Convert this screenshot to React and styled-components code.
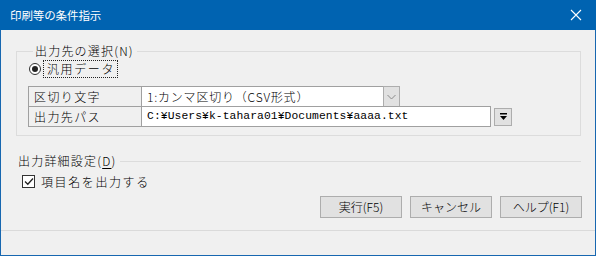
import React from "react";
import styled, { createGlobalStyle } from "styled-components";

const Global = createGlobalStyle`
  html, body { margin: 0; padding: 0; background: #f0f0f0; }
  * { box-sizing: border-box; }
`;

const CJK = `"Noto Sans CJK JP", "Noto Sans", sans-serif`;

const Window = styled.div`
  width: 596px;
  height: 256px;
  border: 1px solid #1767b0;
  border-top: none;
  display: flex;
  flex-direction: column;
  background: #f0f0f0;
  font-family: ${CJK};
  font-weight: 300;
  color: #000;
`;

const TitleBar = styled.div`
  height: 30px;
  margin: 0 -1px;
  background: #0063b1;
  display: flex;
  align-items: center;
  justify-content: space-between;
  padding: 0 10px 0 10px;
  color: #fff;
  font-size: 11.5px;
  font-weight: 400;
  letter-spacing: -0.1px;
`;

const CloseBtn = styled.div`
  width: 20px;
  height: 20px;
  display: flex;
  align-items: center;
  justify-content: center;
`;

const Body = styled.div`
  flex: 1;
  display: flex;
  flex-direction: column;
`;

const Group = styled.fieldset`
  margin: 13px 14px 0 15px;
  padding: 0 0 8px 11px;
  border: 1px solid #dcdcdc;
  min-width: 0;
`;

const Legend = styled.legend`
  margin-left: 5px;
  padding: 0 3px 0 2px;
  font-size: 12px;
  letter-spacing: 1.2px;
  line-height: 16px;
`;

const RadioRow = styled.div`
  display: flex;
  align-items: center;
  height: 19px;
  margin-top: 0px;
  margin-left: 1px;
`;

const RadioDot = styled.span`
  width: 12px;
  height: 12px;
  border-radius: 50%;
  border: 1px solid #333;
  background: #fff;
  display: flex;
  align-items: center;
  justify-content: center;
  &::after {
    content: "";
    width: 6px;
    height: 6px;
    border-radius: 50%;
    background: #222;
  }
`;

const FocusLabel = styled.span`
  margin-left: 2px;
  padding: 0 2px 0 3px;
  height: 18px;
  line-height: 16px;
  border: 1px dotted #222;
  font-size: 12px;
  letter-spacing: 1.6px;
`;

const Table = styled.div`
  margin-top: 8px;
  display: flex;
  flex-direction: column;
`;

const Row = styled.div`
  display: flex;
  align-items: ${(p) => (p.$center ? "center" : "stretch")};
  height: 21px;
  & + & {
    margin-top: -1px;
  }
`;

const LabelCell = styled.div`
  width: 114px;
  height: 21px;
  border: 1px solid #a0a0a0;
  padding-left: 5px;
  font-size: 12px;
  letter-spacing: 1.4px;
  line-height: 19px;
  background: #f0f0f0;
`;

const ValueCell = styled.div`
  width: ${(p) => p.$w}px;
  height: 21px;
  margin-left: -1px;
  border: 1px solid #a0a0a0;
  background: #fff;
  padding-left: 5px;
  line-height: 19px;
  font-size: ${(p) => (p.$mono ? "11.3px" : "12px")};
  letter-spacing: ${(p) => (p.$mono ? "0.1px" : "0.8px")};
  font-family: ${(p) => (p.$mono ? `"Liberation Mono", "DejaVu Sans Mono", monospace` : CJK)};
  font-weight: ${(p) => (p.$mono ? 400 : 300)};
  white-space: nowrap;
  overflow: hidden;
`;

const DropBtn = styled.div`
  width: 17px;
  height: 21px;
  margin-left: -1px;
  border: 1px solid #adadad;
  background: #e1e1e1;
  display: flex;
  align-items: center;
  justify-content: center;
`;

const SmallBtn = styled.div`
  width: 18px;
  height: 18px;
  margin-left: 3px;
  border: 1px solid #adadad;
  background: #e1e1e1;
  display: flex;
  align-items: center;
  justify-content: center;
`;

const SectionHead = styled.div`
  display: flex;
  align-items: center;
  margin: 17px 14px 0 17px;
  font-size: 12px;
  letter-spacing: 1.2px;
  line-height: 16px;
`;

const HeadLine = styled.div`
  flex: 1;
  height: 1px;
  background: #dcdcdc;
  margin-left: 4px;
`;

const U = styled.span`
  text-decoration: underline;
  text-underline-offset: 2px;
`;

const CheckRow = styled.div`
  display: flex;
  align-items: center;
  margin: 5px 0 0 21px;
  height: 14px;
`;

const CheckBox = styled.span`
  width: 13px;
  height: 13px;
  border: 1px solid #333;
  background: #fff;
  display: flex;
  align-items: center;
  justify-content: center;
`;

const CheckText = styled.span`
  margin-left: 6px;
  font-size: 12px;
  letter-spacing: 1.6px;
`;

const ButtonRow = styled.div`
  display: flex;
  justify-content: flex-end;
  gap: 8px;
  margin: 8px 13px 0 0;
`;

const Button = styled.button`
  width: 82px;
  height: 22px;
  border: 1px solid #adadad;
  background: #e1e1e1;
  font-family: ${CJK};
  font-weight: 300;
  font-size: 12px;
  padding: 0;
  color: #000;
  line-height: 18px;
`;

const Separator = styled.div`
  margin-top: 12px;
  height: 1px;
  background: #dadada;
`;

export default function App() {
  return (
    <>
      <Global />
      <Window>
        <TitleBar>
          <span>印刷等の条件指示</span>
          <CloseBtn>
            <svg width="12" height="12" viewBox="0 0 12 12">
              <path d="M1 1 L11 11 M11 1 L1 11" stroke="#fff" strokeWidth="1.1" />
            </svg>
          </CloseBtn>
        </TitleBar>
        <Body>
          <Group>
            <Legend>出力先の選択(N)</Legend>
            <RadioRow>
              <RadioDot />
              <FocusLabel>汎用データ</FocusLabel>
            </RadioRow>
            <Table>
              <Row>
                <LabelCell>区切り文字</LabelCell>
                <ValueCell $w={243}>1:カンマ区切り（CSV形式）</ValueCell>
                <DropBtn>
                  <svg width="9" height="6" viewBox="0 0 9 6">
                    <path d="M0.5 1 L4.5 5 L8.5 1" stroke="#8a8a8a" strokeWidth="1" fill="none" />
                  </svg>
                </DropBtn>
              </Row>
              <Row $center>
                <LabelCell>出力先パス</LabelCell>
                <ValueCell $w={350} $mono>C:¥Users¥k-tahara01¥Documents¥aaaa.txt</ValueCell>
                <SmallBtn>
                  <svg width="9" height="8" viewBox="0 0 9 8">
                    <rect x="1" y="0" width="7" height="1.5" fill="#000" />
                    <path d="M1 3 L8 3 L4.5 7 Z" fill="#000" />
                  </svg>
                </SmallBtn>
              </Row>
            </Table>
          </Group>
          <SectionHead>
            <span>
              出力詳細設定(<U>D</U>)
            </span>
            <HeadLine />
          </SectionHead>
          <CheckRow>
            <CheckBox>
              <svg width="10" height="9" viewBox="0 0 10 9">
                <path d="M1 4.5 L3.8 7.2 L9 1.5" stroke="#222" strokeWidth="1.3" fill="none" />
              </svg>
            </CheckBox>
            <CheckText>項目名を出力する</CheckText>
          </CheckRow>
          <ButtonRow>
            <Button>実行(F5)</Button>
            <Button>キャンセル</Button>
            <Button>ヘルプ(F1)</Button>
          </ButtonRow>
          <Separator />
        </Body>
      </Window>
    </>
  );
}
